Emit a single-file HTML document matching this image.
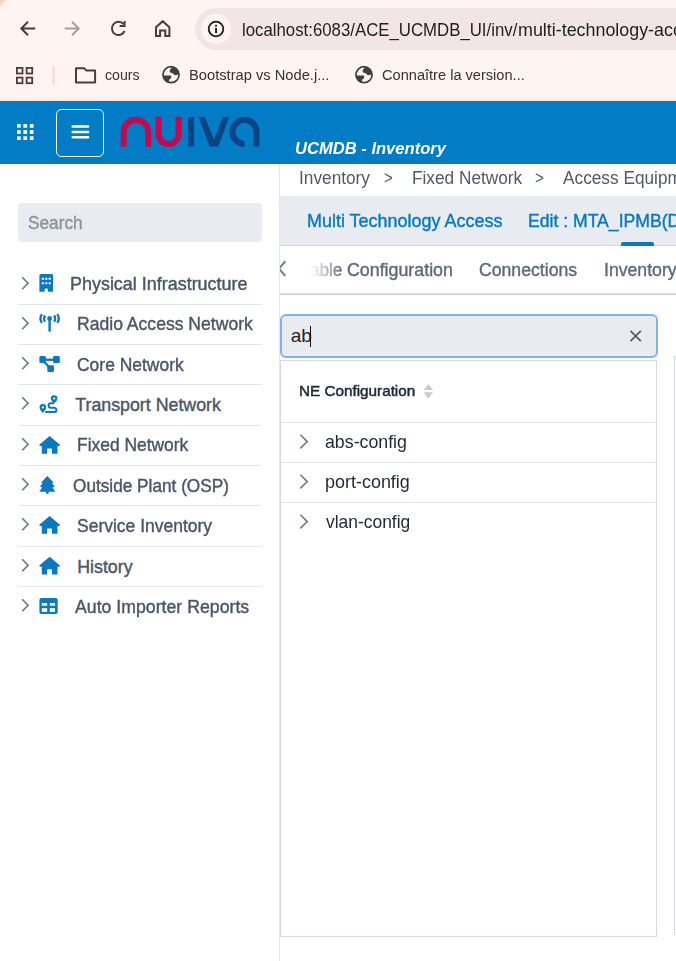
<!DOCTYPE html>
<html><head><meta charset="utf-8">
<style>
*{box-sizing:border-box}
html,body{margin:0;padding:0}
body{width:676px;height:961px;overflow:hidden;position:relative;background:#fff;font-family:"Liberation Sans",sans-serif}
.a{position:absolute}
.t{position:absolute;white-space:nowrap;line-height:1}
svg{position:absolute;overflow:visible}
</style></head><body>

<!-- browser chrome -->
<div class="a" style="left:0;top:0;width:676px;height:101px;background:#fad3c3"></div>
<div class="a" style="left:0;top:0;width:676px;height:101px;background:#fef5f2;border-top-left-radius:9px"></div>

<svg style="left:0;top:0" width="676" height="60">
  <g fill="none" stroke="#523a34" stroke-width="2">
    <path d="M35.2 28.5H21.5M28 21.8L21.3 28.5L28 35.2"/>
  </g>
  <g fill="none" stroke="#a89e9b" stroke-width="2">
    <path d="M64.8 28.5H78.5M72 21.8L78.7 28.5L72 35.2"/>
  </g>
  <g fill="none" stroke="#523a34" stroke-width="2">
    <path d="M123.6 24.2A6.6 6.6 0 1 0 124.6 31"/>
    <path d="M124.6 21V26H119.6"/>
    <path d="M156 36V27.3L162.7 21.2L169.4 27.3V36H165.3V30.6H160.1V36Z"/>
  </g>
</svg>

<div class="a" style="left:195px;top:8px;width:520px;height:42px;border-radius:21px;background:#f1e5e6"></div>
<div class="a" style="left:201px;top:14px;width:30px;height:30px;border-radius:15px;background:#fef5f2"></div>
<svg style="left:0;top:0" width="300" height="60">
  <circle cx="216" cy="29" r="7.3" fill="none" stroke="#1f1a19" stroke-width="1.8"/>
  <rect x="215.1" y="28" width="1.9" height="5" fill="#1f1a19"/>
  <rect x="215.1" y="24.8" width="1.9" height="1.9" fill="#1f1a19"/>
</svg>
<div class="t" style="left:242.21px;top:21px;font-size:18.2px;font-weight:400;font-style:normal;color:#1f1f1f;transform:scaleX(0.9232);transform-origin:0 0;">localhost:6083/ACE_UCMDB_UI/inv/</div>
<div class="t" style="left:518.25px;top:21px;font-size:18.2px;font-weight:400;font-style:normal;color:#1f1f1f;transform:scaleX(0.9826);transform-origin:0 0;">multi-technology-access</div>

<svg style="left:0;top:0" width="676" height="101">
  <g fill="none" stroke="#523a34" stroke-width="1.8">
    <rect x="16.9" y="67.9" width="5.6" height="5.6"/>
    <rect x="26.6" y="67.9" width="5.6" height="5.6"/>
    <rect x="16.9" y="77.6" width="5.6" height="5.6"/>
    <rect x="26.6" y="77.6" width="5.6" height="5.6"/>
  </g>
  <rect x="52.6" y="65.5" width="2" height="19.5" rx="1" fill="#f7d3c8"/>
  <path d="M76 68.2H84.2L86.2 70.4H95.1V82.4H76Z" fill="none" stroke="#523a34" stroke-width="2" stroke-linejoin="round"/>
  <g>
    <circle cx="171" cy="74.7" r="8.05" fill="none" stroke="#3c4043" stroke-width="1.75"/>
    <path fill="#3c4043" d="M171.9 66.8C171.2 68.6 169.8 69.5 169.6 71.2C169.5 72.8 171.8 72.6 173 73.4C174 74.1 174 75.2 175.5 75.2C177 75.2 178.2 74.6 179 74.3A8.05 8.05 0 0 0 171.9 66.8Z"/>
    <path fill="#3c4043" d="M163 75.6L170.6 75.6C171.2 76.3 171.6 77.3 171 78.3C170.3 79.3 169 79.4 168.9 80.5L168.9 82.4A8.05 8.05 0 0 1 163 75.6Z"/>
  </g>
  <g transform="translate(193 0)">
    <circle cx="171" cy="74.7" r="8.05" fill="none" stroke="#3c4043" stroke-width="1.75"/>
    <path fill="#3c4043" d="M171.9 66.8C171.2 68.6 169.8 69.5 169.6 71.2C169.5 72.8 171.8 72.6 173 73.4C174 74.1 174 75.2 175.5 75.2C177 75.2 178.2 74.6 179 74.3A8.05 8.05 0 0 0 171.9 66.8Z"/>
    <path fill="#3c4043" d="M163 75.6L170.6 75.6C171.2 76.3 171.6 77.3 171 78.3C170.3 79.3 169 79.4 168.9 80.5L168.9 82.4A8.05 8.05 0 0 1 163 75.6Z"/>
  </g>
</svg>
<div class="t" style="left:105.47px;top:67px;font-size:15.5px;font-weight:400;font-style:normal;color:#3d302c;transform:scaleX(0.9139);transform-origin:0 0;">cours</div>
<div class="t" style="left:189.47px;top:67px;font-size:15.2px;font-weight:400;font-style:normal;color:#3d302c;transform:scaleX(0.9669);transform-origin:0 0;">Bootstrap vs Node.j...</div>
<div class="t" style="left:381.56px;top:67px;font-size:15.2px;font-weight:400;font-style:normal;color:#3d302c;transform:scaleX(0.9608);transform-origin:0 0;">Connaître la version...</div>

<div class="a" style="left:0;top:100px;width:676px;height:1px;background:#fce6dc"></div>
<!-- app header -->
<div class="a" style="left:0;top:101px;width:676px;height:63px;background:#027cc4"></div>
<svg style="left:0;top:0" width="676" height="170">
  <g fill="#fff">
    <rect x="17" y="124" width="3.7" height="3.7"/><rect x="23.4" y="124" width="3.7" height="3.7"/><rect x="29.8" y="124" width="3.7" height="3.7"/>
    <rect x="17" y="130.2" width="3.7" height="3.7"/><rect x="23.4" y="130.2" width="3.7" height="3.7"/><rect x="29.8" y="130.2" width="3.7" height="3.7"/>
    <rect x="17" y="136.3" width="3.7" height="3.7"/><rect x="23.4" y="136.3" width="3.7" height="3.7"/><rect x="29.8" y="136.3" width="3.7" height="3.7"/>
  </g>
  <rect x="56.5" y="109.5" width="47" height="47" rx="5" fill="none" stroke="#fff" stroke-width="1"/>
  <g stroke="#fff" stroke-width="2.5" stroke-linecap="round">
    <path d="M72.7 126.6H88.1M72.7 131.9H88.1M72.7 137.3H88.1"/>
  </g>
  <g fill="none" stroke-width="5.9">
    <path stroke="#c8074f" d="M123.65 146.7V132.05A12.3 12.3 0 0 1 148.25 132.05V146.7"/>
    <path stroke="#c8074f" d="M158.55 116.8V134A10.05 10.05 0 0 0 178.65 134V116.8"/>
    <path stroke="#0c4386" d="M191.15 117V146.5"/>
    <path stroke="#0c4386" d="M244.45 143.9A12.05 12.05 0 0 1 232.4 131.85A12.05 12.05 0 0 1 256.5 131.85V146.4" stroke-width="6"/>
  </g>
  <polygon fill="#0c4386" points="198.6,117 204.8,117 213.95,139.5 223.1,117 229.3,117 218.3,146.5 209.6,146.5"/>
</svg>
<div class="t" style="left:294.83px;top:140px;font-size:17.3px;font-weight:700;font-style:italic;color:#fff;transform:scaleX(0.9589);transform-origin:0 0;">UCMDB - Inventory</div>

<!-- sidebar -->
<div class="a" style="left:18px;top:203px;width:244px;height:39px;border-radius:4px;background:#e8ebf0"></div>
<div class="t" style="left:28.32px;top:214px;font-size:18.0px;font-weight:400;font-style:normal;color:#8a939e;transform:scaleX(0.9585);transform-origin:0 0;;-webkit-text-stroke:0.4px #8a939e">Search</div>
<div class="t" style="left:70.0px;top:276px;font-size:17.8px;font-weight:400;font-style:normal;color:#4a5668;transform:scaleX(1.009);transform-origin:0 0;;-webkit-text-stroke:0.4px #4a5668">Physical Infrastructure</div>
<div class="t" style="left:77.22px;top:316px;font-size:17.8px;font-weight:400;font-style:normal;color:#4a5668;transform:scaleX(0.9885);transform-origin:0 0;;-webkit-text-stroke:0.4px #4a5668">Radio Access Network</div>
<div class="t" style="left:76.86px;top:357px;font-size:17.8px;font-weight:400;font-style:normal;color:#4a5668;transform:scaleX(0.9817);transform-origin:0 0;;-webkit-text-stroke:0.4px #4a5668">Core Network</div>
<div class="t" style="left:75.31px;top:397px;font-size:17.8px;font-weight:400;font-style:normal;color:#4a5668;;-webkit-text-stroke:0.4px #4a5668">Transport Network</div>
<div class="t" style="left:77.23px;top:437px;font-size:17.8px;font-weight:400;font-style:normal;color:#4a5668;transform:scaleX(0.9793);transform-origin:0 0;;-webkit-text-stroke:0.4px #4a5668">Fixed Network</div>
<div class="t" style="left:72.7px;top:478px;font-size:17.8px;font-weight:400;font-style:normal;color:#4a5668;transform:scaleX(0.9682);transform-origin:0 0;;-webkit-text-stroke:0.4px #4a5668">Outside Plant (OSP)</div>
<div class="t" style="left:76.6px;top:518px;font-size:17.8px;font-weight:400;font-style:normal;color:#4a5668;transform:scaleX(0.9833);transform-origin:0 0;;-webkit-text-stroke:0.4px #4a5668">Service Inventory</div>
<div class="t" style="left:77.21px;top:559px;font-size:17.8px;font-weight:400;font-style:normal;color:#4a5668;;-webkit-text-stroke:0.4px #4a5668">History</div>
<div class="t" style="left:75.34px;top:599px;font-size:17.8px;font-weight:400;font-style:normal;color:#4a5668;transform:scaleX(0.9956);transform-origin:0 0;;-webkit-text-stroke:0.4px #4a5668">Auto Importer Reports</div>
<div class="a" style="left:18px;top:304px;width:244px;height:1px;background:#e3e6ea"></div>
<div class="a" style="left:18px;top:344px;width:244px;height:1px;background:#e3e6ea"></div>
<div class="a" style="left:18px;top:384px;width:244px;height:1px;background:#e3e6ea"></div>
<div class="a" style="left:18px;top:425px;width:244px;height:1px;background:#e3e6ea"></div>
<div class="a" style="left:18px;top:465px;width:244px;height:1px;background:#e3e6ea"></div>
<div class="a" style="left:18px;top:505px;width:244px;height:1px;background:#e3e6ea"></div>
<div class="a" style="left:18px;top:546px;width:244px;height:1px;background:#e3e6ea"></div>
<div class="a" style="left:18px;top:586px;width:244px;height:1px;background:#e3e6ea"></div>
<svg style="left:0;top:0" width="280" height="640">
<g fill="none" stroke="#6b7785" stroke-width="1.6">
<path d="M22.2 277.3L28.1 283.3L22.2 289.3"/>
<path d="M22.2 317.3L28.1 323.3L22.2 329.3"/>
<path d="M22.2 357.3L28.1 363.3L22.2 369.3"/>
<path d="M22.2 397.3L28.1 403.3L22.2 409.3"/>
<path d="M22.2 438.3L28.1 444.3L22.2 450.3"/>
<path d="M22.2 478.3L28.1 484.3L22.2 490.3"/>
<path d="M22.2 518.3L28.1 524.3L22.2 530.3"/>
<path d="M22.2 559.3L28.1 565.3L22.2 571.3"/>
<path d="M22.2 599.3L28.1 605.3L22.2 611.3"/>
</g>
<g fill="#0a78c2">
<path d="M40.9 274.1H51.6A1.5 1.5 0 0 1 53.1 275.6V291.8H47.9V289.8A1.65 1.65 0 0 0 44.6 289.8V291.8H39.4V275.6A1.5 1.5 0 0 1 40.9 274.1Z"/>
</g><g fill="#fff">
<rect x="41.75" y="277.75" width="2.1" height="2.1" rx="0.3"/>
<rect x="41.75" y="282.15" width="2.1" height="2.1" rx="0.3"/>
<rect x="45.25" y="277.75" width="2.1" height="2.1" rx="0.3"/>
<rect x="45.25" y="282.15" width="2.1" height="2.1" rx="0.3"/>
<rect x="48.65" y="277.75" width="2.1" height="2.1" rx="0.3"/>
<rect x="48.65" y="282.15" width="2.1" height="2.1" rx="0.3"/>
</g>
<g fill="none" stroke="#0a78c2" stroke-width="2.3">
<path d="M41.9 314.1A8 8 0 0 0 41.9 322.9M45 315.3A6.4 6.4 0 0 0 45 321.7M57.3 314.1A8 8 0 0 1 57.3 322.9M54.2 315.3A6.4 6.4 0 0 1 54.2 321.7"/>
</g>
<rect x="48.4" y="318.5" width="2.4" height="13.2" rx="0.8" fill="#0a78c2"/>
<circle cx="49.6" cy="318.5" r="2.4" fill="#0a78c2"/>
<g fill="#0a78c2">
<rect x="39.4" y="356.1" width="6.5" height="6.9" rx="1.3"/>
<rect x="53" y="356.1" width="6.8" height="6.9" rx="1.3"/>
<rect x="45" y="358.6" width="9" height="2.3"/>
<rect x="47.3" y="365.3" width="6.7" height="6.6" rx="1.3"/>
</g>
<path d="M44 361.5L49 367" stroke="#0a78c2" stroke-width="2.3"/>
<path d="M54 403.3H50.8A2.2 2.2 0 0 0 50.8 407.7H54.2A2.2 2.2 0 0 1 54.2 412.1H45.2" fill="none" stroke="#0a78c2" stroke-width="2"/>
<path fill-rule="evenodd" fill="#0a78c2" d="M39.55 407.40A3.3 3.3 0 1 1 46.15 407.40C46.15 409.40 44.05 411.20 42.85 413.00C41.65 411.20 39.55 409.40 39.55 407.40ZM41.75 407.40A1.1 1.1 0 1 0 43.95 407.40A1.1 1.1 0 1 0 41.75 407.40Z"/>
<path fill-rule="evenodd" fill="#0a78c2" d="M50.80 398.50A3.3 3.3 0 1 1 57.40 398.50C57.40 400.50 55.30 402.30 54.10 403.50C52.90 402.30 50.80 400.50 50.80 398.50ZM53.00 398.50A1.1 1.1 0 1 0 55.20 398.50A1.1 1.1 0 1 0 53.00 398.50Z"/>
<path fill="#0a78c2" transform="translate(0 0)" d="M49.6 435.9L59.9 444.8L59.4 445.9H57.5V453.7H52V449.4A1 1 0 0 0 51 448.4H48A1 1 0 0 0 47 449.4V453.7H41.8V445.9H39.8L39.3 444.8Z"/>
<path fill="#0a78c2" transform="translate(0 80.0)" d="M49.6 435.9L59.9 444.8L59.4 445.9H57.5V453.7H52V449.4A1 1 0 0 0 51 448.4H48A1 1 0 0 0 47 449.4V453.7H41.8V445.9H39.8L39.3 444.8Z"/>
<path fill="#0a78c2" transform="translate(0 120.80000000000001)" d="M49.6 435.9L59.9 444.8L59.4 445.9H57.5V453.7H52V449.4A1 1 0 0 0 51 448.4H48A1 1 0 0 0 47 449.4V453.7H41.8V445.9H39.8L39.3 444.8Z"/>
<polygon fill="#0a78c2" points="47.36,476.1 53.6,482.6 52.1,483.3 54.7,486.6 52.6,487.4 55.4,491.7 48.6,491.7 48.6,493.8 46.1,493.8 46.1,491.7 39.3,491.7 42.1,487.4 40,486.6 42.6,483.3 41.1,482.6"/>
<rect x="39.4" y="598" width="18.3" height="16" rx="2" fill="#0a78c2"/>
<g fill="#fff"><rect x="41.8" y="603" width="5.4" height="2.7"/><rect x="49.8" y="603" width="5.2" height="2.7"/><rect x="41.8" y="608.2" width="5.4" height="3.7"/><rect x="49.8" y="608.2" width="5.2" height="3.7"/></g>
</svg>


<!-- main -->
<div class="a" style="left:279px;top:164px;width:1px;height:797px;background:#e6e8ec"></div>
<div class="t" style="left:298.87px;top:169px;font-size:18.0px;font-weight:400;font-style:normal;color:#505966;transform:scaleX(0.959);transform-origin:0 0;">Inventory</div>
<div class="t" style="left:383.59px;top:169px;font-size:18.0px;font-weight:400;font-style:normal;color:#505966;transform:scaleX(0.8286);transform-origin:0 0;">&gt;</div>
<div class="t" style="left:411.75px;top:169px;font-size:18.0px;font-weight:400;font-style:normal;color:#505966;transform:scaleX(0.9582);transform-origin:0 0;">Fixed Network</div>
<div class="t" style="left:535.47px;top:169px;font-size:18.0px;font-weight:400;font-style:normal;color:#505966;transform:scaleX(0.8504);transform-origin:0 0;">&gt;</div>
<div class="t" style="left:563.0px;top:169px;font-size:18.0px;font-weight:400;font-style:normal;color:#505966;transform:scaleX(0.9582);transform-origin:0 0;">Access Equipment</div>

<div class="a" style="left:280px;top:196px;width:396px;height:50px;background:#e8ebef;border-bottom:1px solid #d3d7dd"></div>
<div class="t" style="left:306.8px;top:213px;font-size:17.9px;font-weight:400;font-style:normal;color:#0a78c2;transform:scaleX(1.0047);transform-origin:0 0;;-webkit-text-stroke:0.4px #0a78c2">Multi Technology Access</div>
<div class="t" style="left:528.1999999999999px;top:213px;font-size:17.9px;font-weight:400;font-style:normal;color:#0a78c2;transform:scaleX(0.984);transform-origin:0 0;;-webkit-text-stroke:0.4px #0a78c2">Edit : MTA_IPMB(DEV)</div>
<div class="a" style="left:621px;top:242px;width:33px;height:3.5px;border-radius:2px 2px 0 0;background:#0a78c2"></div>

<div class="a" style="left:280px;top:292px;width:396px;height:1px;background:#f4f5f7"></div>
<div class="a" style="left:280px;top:293px;width:396px;height:1px;background:#e5e8ec"></div>
<div class="a" style="left:280px;top:294px;width:396px;height:1px;background:#c9cacc"></div>
<div class="t" style="left:310.45px;top:262px;font-size:17.6px;font-weight:400;font-style:normal;color:#5f6b7b;transform:scaleX(0.974);transform-origin:0 0;-webkit-mask-image:linear-gradient(90deg,rgba(0,0,0,0) 0px,rgba(0,0,0,.08) 4px,rgba(0,0,0,1) 34px);-webkit-text-stroke:0.4px #5f6b7b">able</div>
<div class="t" style="left:346.94px;top:262px;font-size:17.6px;font-weight:400;font-style:normal;color:#5f6b7b;transform:scaleX(1.012);transform-origin:0 0;;-webkit-text-stroke:0.4px #5f6b7b">Configuration</div>
<div class="t" style="left:479.35px;top:262px;font-size:17.6px;font-weight:400;font-style:normal;color:#5f6b7b;transform:scaleX(1.003);transform-origin:0 0;;-webkit-text-stroke:0.4px #5f6b7b">Connections</div>
<div class="t" style="left:603.7px;top:262px;font-size:17.6px;font-weight:400;font-style:normal;color:#5f6b7b;transform:scaleX(1.003);transform-origin:0 0;;-webkit-text-stroke:0.4px #5f6b7b">Inventory</div>
<div class="a" style="left:279.5px;top:250px;width:20px;height:40px;overflow:hidden">
<svg style="left:-279.5px;top:-250px" width="676" height="300">
  <path d="M285.3 261.2L279 268.6L285.3 276" fill="none" stroke="#7d8793" stroke-width="2.2"/>
</svg></div>
<div class="a" style="left:279px;top:250px;width:1px;height:40px;background:#e6e8ec"></div>

<div class="a" style="left:280px;top:314px;width:377.5px;height:44px;border:2px solid #7db3f6;border-radius:6px;background:#e8ebf0"></div>
<div class="t" style="left:290.79px;top:326px;font-size:19.0px;font-weight:400;font-style:normal;color:#1b2533;">ab</div>
<div class="a" style="left:310px;top:326px;width:1px;height:21px;background:#111"></div>
<svg style="left:0;top:0" width="676" height="400">
  <path d="M630.5 330.8L640.8 341.1M640.8 330.8L630.5 341.1" stroke="#555e6b" stroke-width="1.8"/>
</svg>

<div class="a" style="left:280px;top:360px;width:377px;height:577px;border:1px solid #d6dae0"></div>
<div class="t" style="left:298.64px;top:383px;font-size:15.4px;font-weight:400;font-style:normal;color:#1d2939;transform:scaleX(0.9918);transform-origin:0 0;;-webkit-text-stroke:0.5px #1d2939">NE Configuration</div>
<svg style="left:0;top:0" width="676" height="600">
  <path d="M423.6 389.9L428.35 384L433.1 389.9Z" fill="#c9cdd3"/>
  <path d="M423.6 392.3L428.35 398.4L433.1 392.3Z" fill="#c9cdd3"/>
  <g fill="none" stroke="#6f7b89" stroke-width="1.6">
    <path d="M300.3 434.8L307.3 441.6L300.3 448.4"/>
    <path d="M300.3 474.8L307.3 481.6L300.3 488.4"/>
    <path d="M300.3 514.8L307.3 521.6L300.3 528.4"/>
  </g>
</svg>
<div class="a" style="left:281px;top:422px;width:375px;height:1px;background:#e3e6ea"></div>
<div class="a" style="left:281px;top:462px;width:375px;height:1px;background:#e3e6ea"></div>
<div class="a" style="left:281px;top:502px;width:375px;height:1px;background:#e3e6ea"></div>
<div class="t" style="left:325.25px;top:432px;font-size:19.0px;font-weight:400;font-style:normal;color:#1d2939;transform:scaleX(0.9345);transform-origin:0 0;">abs-config</div>
<div class="t" style="left:325.39px;top:472px;font-size:19.0px;font-weight:400;font-style:normal;color:#1d2939;transform:scaleX(0.9449);transform-origin:0 0;">port-config</div>
<div class="t" style="left:325.63px;top:512px;font-size:19.0px;font-weight:400;font-style:normal;color:#1d2939;transform:scaleX(0.917);transform-origin:0 0;">vlan-config</div>

<div class="a" style="left:674px;top:356px;width:10px;height:579px;border:1px solid #d6dae0"></div>

</body></html>
